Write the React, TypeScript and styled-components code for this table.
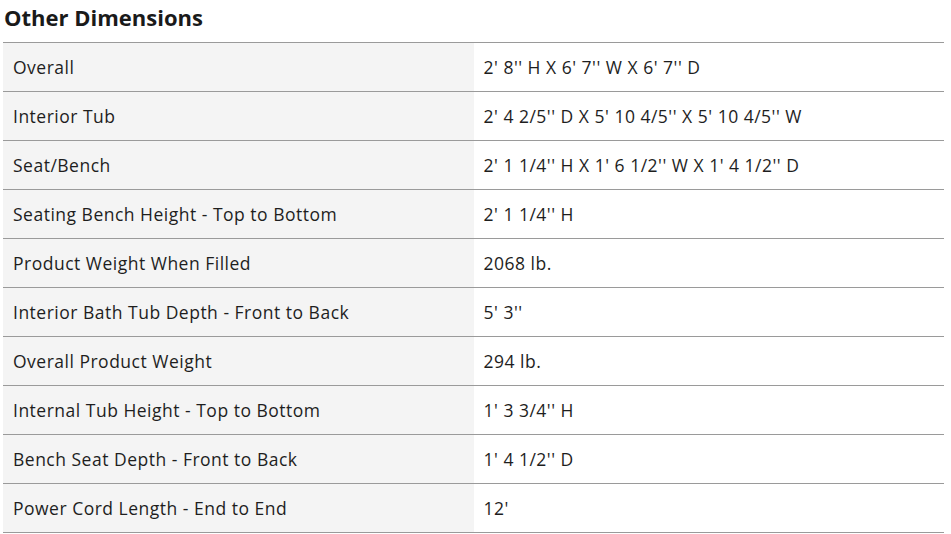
import React from "react";
import styled, {createGlobalStyle} from "styled-components";

const GlobalStyle = createGlobalStyle`
    body {
        margin: 0;
        background: #ffffff;
        font-family: "Open Sans", Lato, sans-serif;
        color: #1f1f1f;
    }
`;

const Section = styled.section`
    padding: 2px 7px 0 3px;
`;

const Title = styled.h2`
    margin: 0 0 10px 1px;
    font-size: 22px;
    line-height: 30px;
    font-weight: 700;
    color: #1a1a1a;
`;

const Table = styled.table`
    width: 100%;
    border-collapse: collapse;
    font-size: 17.5px;
    letter-spacing: 0.5px;
`;

const Row = styled.tr`
    height: 49px;
    border-top: 1px solid #9a9a9a;
    border-bottom: 1px solid #9a9a9a;
`;

const Cell = styled.td<{ $label?: boolean }>`
    width: 50%;
    padding: 0 10px;
    vertical-align: middle;
    background: ${p => (p.$label ? "#f4f4f4" : "#ffffff")};
    color: #1e1e1e;
`;

const rows: [string, string][] = [
    ["Overall", "2' 8'' H X 6' 7'' W X 6' 7'' D"],
    ["Interior Tub", "2' 4 2/5'' D X 5' 10 4/5'' X 5' 10 4/5'' W"],
    ["Seat/Bench", "2' 1 1/4'' H X 1' 6 1/2'' W X 1' 4 1/2'' D"],
    ["Seating Bench Height - Top to Bottom", "2' 1 1/4'' H"],
    ["Product Weight When Filled", "2068 lb."],
    ["Interior Bath Tub Depth - Front to Back", "5' 3''"],
    ["Overall Product Weight", "294 lb."],
    ["Internal Tub Height - Top to Bottom", "1' 3 3/4'' H"],
    ["Bench Seat Depth - Front to Back", "1' 4 1/2'' D"],
    ["Power Cord Length - End to End", "12'"],
];

const App: React.FC = () => {
    return (
        <>
            <GlobalStyle/>
            <Section>
                <Title>Other Dimensions</Title>
                <Table>
                    <tbody>
                        {rows.map(([label, value]) => (
                            <Row key={label}>
                                <Cell $label>{label}</Cell>
                                <Cell>{value}</Cell>
                            </Row>
                        ))}
                    </tbody>
                </Table>
            </Section>
        </>
    );
};

export default App;
